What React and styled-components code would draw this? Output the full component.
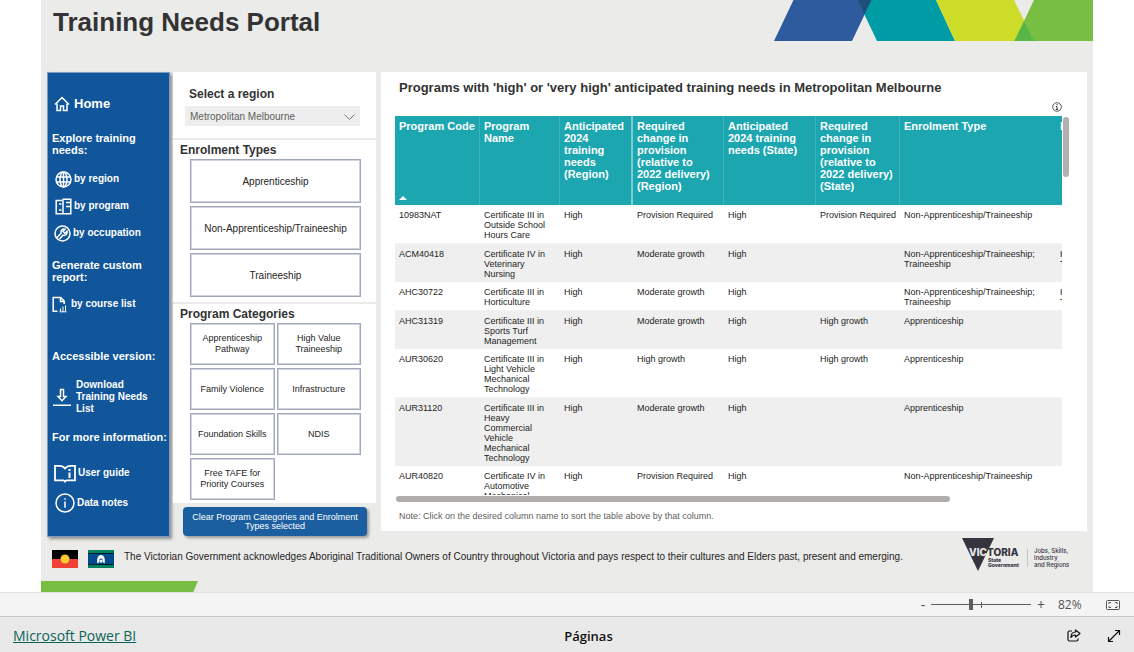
import React, {useState} from "react"
import styled, {createGlobalStyle} from "styled-components";

const GlobalStyle = createGlobalStyle`
* {
	box-sizing: border-box;
}
body {
	margin: 0;
	background: #fff;
	color: #252423;
	font-family: "Liberation Sans", Arial, sans-serif;
}
button, select, input {
	font-family: inherit;
}
`

const columns = [
	{title: "Program Code", width: 85, sorted: true},
	{title: "Program Name", width: 80},
	{title: "Anticipated 2024 training needs (Region)", width: 73, divider: true},
	{title: "Required change in provision (relative to 2022 delivery) (Region)", width: 91, pad: 12},
	{title: "Anticipated 2024 training needs (State)", width: 92},
	{title: "Required change in provision (relative to 2022 delivery) (State)", width: 84},
	{title: "Enrolment Type", width: 156, plain: true},
	{title: "Program Category", width: 100, plain: true},
];

const programs = [
	["10983NAT", "Certificate III in Outside School Hours Care", "High", "Provision Required", "High", "Provision Required", "Non-Apprenticeship/Traineeship", ""],
	["ACM40418", "Certificate IV in Veterinary Nursing", "High", "Moderate growth", "High", "", "Non-Apprenticeship/Traineeship; Traineeship", "High Value Traineeship"],
	["AHC30722", "Certificate III in Horticulture", "High", "Moderate growth", "High", "", "Non-Apprenticeship/Traineeship; Traineeship", "High Value Traineeship"],
	["AHC31319", "Certificate III in Sports Turf Management", "High", "Moderate growth", "High", "High growth", "Apprenticeship", ""],
	["AUR30620", "Certificate III in Light Vehicle Mechanical Technology", "High", "High growth", "High", "High growth", "Apprenticeship", ""],
	["AUR31120", "Certificate III in Heavy Commercial Vehicle Mechanical Technology", "High", "Moderate growth", "High", "", "Apprenticeship", ""],
	["AUR40820", "Certificate IV in Automotive Mechanical Diagnosis", "High", "Provision Required", "High", "", "Non-Apprenticeship/Traineeship", ""],
];

const enrolmentTypes = ["Apprenticeship", "Non-Apprenticeship/Traineeship", "Traineeship"];

const categories = [
	"Apprenticeship Pathway",
	"High Value Traineeship",
	"Family Violence",
	"Infrastructure",
	"Foundation Skills",
	"NDIS",
	"Free TAFE for Priority Courses",
];

/* ---------- page ---------- */

const Report = styled.div`
	margin: 0 41px;
	background: #ebebea;
`

const Header = styled.header`
	display: flex;
	justify-content: space-between;
	align-items: flex-start;
	height: 72px;
	padding-left: 12px;
	svg {
		display: block;
		flex: none;
	}
`

const PageTitle = styled.h1`
	margin: 0;
	padding-top: 6px;
	font-size: 26px;
	line-height: 32px;
	color: #333;
`

const Body = styled.div`
	display: flex;
	align-items: flex-start;
	padding: 0 6px;
`

/* ---------- sidebar ---------- */

const Sidebar = styled.nav`
	flex: none;
	display: flex;
	flex-direction: column;
	width: 123px;
	height: 465px;
	padding: 20px 0 0 4px;
	background: #11569b;
	border: 1px solid #7f9cc0;
	box-shadow: 2px 2px 3px rgba(0, 0, 0, 0.4);
`

const NavHeading = styled.h2`
	margin: ${props => props.$top || 0}px 0 0;
	font-size: 11px;
	line-height: 12px;
	color: #fff;
	white-space: ${props => (props.$oneLine ? "nowrap" : "normal")};
`

const NavItem = styled.a`
	display: flex;
	align-items: center;
	gap: ${props => props.$gap || 2}px;
	min-height: 22px;
	margin-top: ${props => props.$top || 0}px;
	padding-left: ${props => props.$indent || 0}px;
	padding-right: 10px;
	font-size: ${props => (props.$large ? 13 : 10)}px;
	font-weight: bold;
	line-height: 12px;
	color: #fff;
	text-decoration: none;
	svg {
		flex: none;
	}
`

/* ---------- filters ---------- */

const Filters = styled.div`
	flex: none;
	display: flex;
	flex-direction: column;
	gap: 2px;
	width: 203px;
	margin-left: 3px;
`

const FilterPanel = styled.section`
	padding: ${props => props.$pad};
	background: #fff;
`

const FilterTitle = styled.h2`
	margin: 0 0 0 7px;
	font-size: 12px;
	line-height: 16px;
	color: #333;
`

const RegionLabel = styled.label`
	display: block;
	padding-left: 4px;
	margin-bottom: 4px;
	font-size: 12px;
	font-weight: bold;
	line-height: 16px;
	color: #333;
`

const SelectBox = styled.div`
	position: relative;
	width: 175px;
	svg {
		position: absolute;
		top: 8px;
		right: 5px;
		pointer-events: none;
	}
`

const Select = styled.select`
	display: block;
	appearance: none;
	width: 100%;
	height: 20px;
	padding: 0 20px 0 5px;
	border: 0;
	border-radius: 0;
	background: #eee;
	color: #605e5c;
	font-size: 10px;
`

const TileGrid = styled.div`
	display: grid;
	grid-template-columns: repeat(${props => props.$columns}, 1fr);
	grid-auto-rows: ${props => props.$rowHeight}px;
	gap: 3px 2px;
	margin: 1px 15px 0 17px;
`

const Tile = styled.button`
	padding: 0 6px;
	border: 1px solid #a0a7ba;
	box-shadow: inset 0 0 0 1px #d0d4de;
	background: ${props => (props.$active ? "#d6dde8" : "#fff")};
	color: #252423;
	font-size: ${props => (props.$small ? 9 : 10)}px;
	line-height: 11px;
	cursor: pointer;
`

const ClearButton = styled.button`
	width: 184px;
	height: 29px;
	margin: 2px 0 0 10px;
	padding: 0 8px;
	border: 0;
	border-radius: 4px;
	background: #1b5fa0;
	box-shadow: 2px 2px 3px rgba(0, 0, 0, 0.35);
	color: #fff;
	font-size: 9px;
	line-height: 9px;
	cursor: pointer;
`

/* ---------- table ---------- */

const Main = styled.main`
	flex: 1;
	min-width: 0;
	margin-left: 5px;
	padding: 7px 18px 9px 14px;
	background: #fff;
`

const MainTitle = styled.h2`
	margin: 0 0 0 4px;
	font-size: 13px;
	line-height: 18px;
	color: #333;
`

const InfoRow = styled.div`
	display: flex;
	justify-content: flex-end;
	height: 19px;
	padding: 5px 7px 0 0;
`

const TableArea = styled.div`
	display: grid;
	grid-template-columns: 1fr 6px;
	gap: 1px;
`

const TableScroll = styled.div`
	height: 379px;
	overflow: hidden;
`

const Table = styled.table`
	table-layout: fixed;
	width: 761px;
	border-collapse: separate;
	border-spacing: 0;
	font-size: 9px;
	line-height: 10px;
`

const HeadCell = styled.th`
	position: relative;
	height: 89px;
	padding: 4px ${props => props.$pad || 2}px 0 4px;
	border-right: ${props => (props.$divider ? 2 : 1)}px solid ${props => (props.$divider ? "#7fcdd2" : props.$plain ? "#1ba6b0" : "#3fb4bd")};
	background: #1ba6b0;
	color: #fff;
	font-size: 11px;
	line-height: 12px;
	text-align: left;
	vertical-align: top;
	white-space: ${props => (props.$plain ? "nowrap" : "normal")};
	svg {
		position: absolute;
		left: 4px;
		bottom: 5px;
	}
`

const Row = styled.tr`
	td {
		padding: 5px 2px 3px 4px;
		vertical-align: top;
	}
	td:last-child {
		padding-right: 40px;
	}
	&:nth-child(odd) td {
		border-bottom: 1px solid #f4f4f4;
	}
	&:nth-child(even) td {
		background: #efefef;
	}
`

const VerticalThumb = styled.div`
	height: 60px;
	margin-top: 1px;
	border-radius: 3px;
	background: #b0b0b0;
`

const HorizontalThumb = styled.div`
	width: 83%;
	height: 6px;
	margin-left: 1px;
	border-radius: 3px;
	background: #b0aeac;
`

const Note = styled.p`
	margin: 8px 0 0 4px;
	font-size: 9px;
	line-height: 12px;
	color: #605e5c;
`

/* ---------- footer ---------- */

const Acknowledgement = styled.footer`
	display: flex;
	align-items: center;
	gap: 10px;
	height: 44px;
	padding: 0 21px 0 11px;
	svg {
		flex: none;
	}
	svg:last-child {
		align-self: flex-start;
	}
	p {
		flex: 1;
		margin: 0;
		padding-bottom: 4px;
		font-size: 10px;
		line-height: 14px;
	}
`

const GreenStrip = styled.div`
	width: 157px;
	height: 11px;
	background: #78be43;
	clip-path: polygon(0 0, 100% 0, 97% 100%, 0 100%);
`

const ZoomBar = styled.div`
	display: flex;
	align-items: center;
	justify-content: flex-end;
	height: 24px;
	padding-right: 14px;
	border-top: 1px solid #e1e1e1;
	background: #f4f4f4;
	color: #555;
	font-family: "Open Sans", "Noto Sans", sans-serif;
	font-size: 12px;
`

const IconButton = styled.button`
	display: flex;
	align-items: center;
	justify-content: center;
	width: ${props => props.$width || 16}px;
	height: 20px;
	padding: 0;
	border: 0;
	background: none;
	color: inherit;
	font-size: 14px;
	cursor: pointer;
`

const SliderTrack = styled.div`
	position: relative;
	width: 100px;
	height: 20px;
	&:after {
		content: "";
		position: absolute;
		left: 50px;
		top: 7px;
		width: 1px;
		height: 6px;
		background: #605e5c;
	}
`

const Slider = styled.input`
	appearance: none;
	display: block;
	width: 100%;
	height: 20px;
	margin: 0;
	background: linear-gradient(#605e5c, #605e5c) center / 100% 1px no-repeat;
	&::-webkit-slider-thumb {
		appearance: none;
		width: 4px;
		height: 11px;
		background: #605e5c;
	}
`

const ZoomValue = styled.span`
	width: 30px;
	margin: 0 18px 0 7px;
	white-space: nowrap;
`

const BottomBar = styled.div`
	display: grid;
	grid-template-columns: 1fr auto 1fr;
	align-items: center;
	height: 36px;
	padding: 2px 12px 0 13px;
	border-top: 1px solid #c8c8c8;
	background: #e9e9e9;
	font-family: "Open Sans", "Noto Sans", sans-serif;
`

const BrandLink = styled.a`
	justify-self: start;
	color: #0b6357;
	font-size: 14px;
	line-height: 20px;
`

const PagesLabel = styled.span`
	margin-left: 42px;
	font-size: 13px;
	font-weight: 600;
	line-height: 20px;
	color: #111;
`

const BarActions = styled.div`
	display: flex;
	justify-content: flex-end;
	gap: 24px;
	color: #111;
`

/* ---------- drawings ---------- */

function Icon({size = 16, height, children, width = 1.5}) {
	return (
		<svg width={size} height={height || size} viewBox={`0 0 ${size} ${height || size}`} fill="none" stroke="currentColor" strokeWidth={width} aria-hidden="true">
			{children}
		</svg>
	);
}

const HomeIcon = () => (
	<Icon size={16}>
		<path d="M1 8.500 8 1.500l7 7M3 7.500v7h3.500v-4.500h3v4.500H13v-7" />
	</Icon>
);

const GlobeIcon = () => (
	<Icon size={17}>
		<circle cx="8.500" cy="8.500" r="7.500" />
		<ellipse cx="8.500" cy="8.500" rx="3.500" ry="7.500" />
		<path d="M1.500 6h14M1.500 11h14M8.500 1v15" />
	</Icon>
);

const ProgramIcon = () => (
	<Icon size={17}>
		<path d="M7 2.500H1.200v13.300H8M8 1.200h7.800v14.600H8zM4 6h2.500M4 12h2.500M11 4.500h4M11 8.500h4" />
	</Icon>
);

const WrenchIcon = () => (
	<Icon size={17}>
		<circle cx="8.500" cy="8.500" r="7.500" />
		<path d="M3 12.500 7 8.300C6.200 5.500 8.500 3.500 11 4.200L9 6.300l1.800 1.900 2.300-2c.6 2.700-1.500 4.600-4 4L5.500 14" />
	</Icon>
);

const CourseListIcon = () => (
	<Icon size={16} height={17}>
		<path d="M5.500 15.300H1.200V1.500h7.500l3.500 3.600V8M8.500 1.500v4h3.700" />
		<path d="M8.500 15.500v-3M11 15.500v-5M13.500 15.500v-6M7.500 15.800h7" strokeWidth="1" />
	</Icon>
);

const DownloadIcon = () => (
	<Icon size={18} height={19}>
		<path d="M7.500 1.500h3v7H13l-4 4.200-4-4.200h2.500zM0 17.300h18" />
	</Icon>
);

const GuideIcon = () => (
	<Icon size={22} height={19} width={1.8}>
		<path d="M11 4.500C9.500 2.500 7 1.800 5.500 1.800H1v14.500h8.300c.7 0 1.200.4 1.700 1.200.5-.8 1-1.200 1.700-1.200H21V1.800h-4.500c-2.500 0-4 .7-5.500 2.700z" />
		<path d="M15.500 5v2M15.500 8.500V14" strokeWidth="2" />
	</Icon>
);

const NotesIcon = () => (
	<Icon size={20}>
		<circle cx="10" cy="10" r="9" />
		<path d="M10 5.200v1.600M10 8.500v6.300" />
	</Icon>
);

function HeaderBanner() {
	return (
		<svg width="319" height="41" viewBox="0 0 319 41" aria-hidden="true">
			<path d="M19.500 0h78L78 41H0z" fill="#2e5a9e" />
			<path d="M83.500 0h78.500l19 41h-78z" fill="#009ca6" />
			<path d="M83.500 0h14L90.500 14.500z" fill="#1f5079" />
			<path d="M162 0h78l20 41h-79z" fill="#cddc29" />
			<path d="M260 0h59v41h-78.500z" fill="#78be43" />
			<path d="M250 21 260 41h-19.500z" fill="#58b647" />
		</svg>
	);
}

function AboriginalFlag() {
	return (
		<svg width="26" height="18" viewBox="0 0 26 18" role="img" aria-label="Aboriginal flag">
			<path d="M0 0h26v9H0z" fill="#000" />
			<path d="M0 9h26v9H0z" fill="#ef4135" />
			<circle cx="13" cy="9" r="4.500" fill="#fecb2f" />
		</svg>
	);
}

function TorresStraitFlag() {
	return (
		<svg width="26" height="18" viewBox="0 0 26 18" role="img" aria-label="Torres Strait Islander flag">
			<path d="M0 0h26v18H0z" fill="#00815f" />
			<path d="M0 3h26v12H0z" fill="#001a2b" />
			<path d="M0 4h26v10H0z" fill="#004b8d" />
			<path d="M9.500 13.500c-1-4 0-8.500 3.500-8.500s4.500 4.500 3.500 8.500L14.800 12c.3-2-.3-3.500-1.800-3.500S10.900 10 11.200 12z" fill="#fff" />
			<path d="m13 9 .7 1.300 1.400.2-1 1 .2 1.400-1.300-.7-1.300.7.2-1.400-1-1 1.400-.2z" fill="#fff" />
		</svg>
	);
}

function VictoriaLogo() {
	return (
		<svg width="110" height="36" viewBox="0 0 110 36" fontFamily="Inter, sans-serif" fill="#35343f">
			<path d="M0 1h32L16 34z" />
			<text x="7" y="19" fontSize="10" fontWeight="800">
				<tspan fill="#ebebea">VIC</tspan>TORIA
			</text>
			<text x="26" y="25" fontSize="5" fontWeight="800">State</text>
			<text x="26" y="30" fontSize="5" fontWeight="800">Government</text>
			<path d="M65 12h1v18h-1z" fill="#c4c4c4" />
			<g fontSize="6" fontWeight="500">
				<text x="72" y="16">Jobs, Skills,</text>
				<text x="72" y="23">Industry</text>
				<text x="72" y="30">and Regions</text>
			</g>
		</svg>
	);
}

/* ---------- sections ---------- */

function Navigation() {
	return (
		<Sidebar>
			<NavItem href="#home" $indent={2} $gap={4} $large><HomeIcon />Home</NavItem>
			<NavHeading $top={17}>Explore training needs:</NavHeading>
			<NavItem href="#region" $top={12} $indent={3}><GlobeIcon />by region</NavItem>
			<NavItem href="#program" $top={5} $indent={3}><ProgramIcon />by program</NavItem>
			<NavItem href="#occupation" $top={5} $indent={2}><WrenchIcon />by occupation</NavItem>
			<NavHeading $top={15}>Generate custom report:</NavHeading>
			<NavItem href="#courses" $top={10} $gap={3}><CourseListIcon />by course list</NavItem>
			<NavHeading $top={35}>Accessible version:</NavHeading>
			<NavItem href="#download" $top={17} $indent={1} $gap={5}><DownloadIcon /><span>Download Training Needs List</span></NavItem>
			<NavHeading $top={16} $oneLine>For more information:</NavHeading>
			<NavItem href="#guide" $top={19} $indent={2}><GuideIcon />User guide</NavItem>
			<NavItem href="#notes" $top={8} $indent={3}><NotesIcon />Data notes</NavItem>
		</Sidebar>
	);
}

function FilterColumn() {
	const [selected, setSelected] = useState([]);
	const toggle = name =>
		setSelected(selected.includes(name) ? selected.filter(s => s !== name) : [...selected, name]);

	return (
		<Filters>
			<FilterPanel $pad="14px 0 12px 12px">
				<RegionLabel htmlFor="region">Select a region</RegionLabel>
				<SelectBox>
					<Select id="region" defaultValue="Metropolitan Melbourne">
						<option>Metropolitan Melbourne</option>
					</Select>
					<svg width="11" height="6" viewBox="0 0 11 6" fill="none" stroke="#777"><path d="m.5.5 5 5 5-5" /></svg>
				</SelectBox>
			</FilterPanel>
			<FilterPanel $pad="2px 0 5px">
				<FilterTitle>Enrolment Types</FilterTitle>
				<TileGrid $columns={1} $rowHeight={44}>
					{enrolmentTypes.map(name => (
						<Tile key={name} $active={selected.includes(name)} onClick={() => toggle(name)}>{name}</Tile>
					))}
				</TileGrid>
			</FilterPanel>
			<FilterPanel $pad="2px 0 3px">
				<FilterTitle>Program Categories</FilterTitle>
				<TileGrid $columns={2} $rowHeight={42}>
					{categories.map(name => (
						<Tile key={name} $small $active={selected.includes(name)} onClick={() => toggle(name)}>{name}</Tile>
					))}
				</TileGrid>
			</FilterPanel>
			<ClearButton onClick={() => setSelected([])}>Clear Program Categories and Enrolment Types selected</ClearButton>
		</Filters>
	);
}

function ProgramTable() {
	return (
		<Main>
			<MainTitle>Programs with 'high' or 'very high' anticipated training needs in Metropolitan Melbourne</MainTitle>
			<InfoRow>
				<svg width="10" height="10" viewBox="0 0 10 10" fill="none" stroke="#333" role="img" aria-label="Information">
					<circle cx="5" cy="5" r="4.300" strokeWidth=".8" />
					<path d="M5 2v1.200M4 4.500h1v3M3.800 7.500h2.400" />
				</svg>
			</InfoRow>
			<TableArea>
				<TableScroll>
					<Table>
						<colgroup>
							{columns.map(col => <col key={col.title} width={col.width} />)}
						</colgroup>
						<thead>
							<tr>
								{columns.map(col => (
									<HeadCell key={col.title} $divider={col.divider} $plain={col.plain} $pad={col.pad}>
										{col.title}
										{col.sorted && <svg width="8" height="4" viewBox="0 0 8 4"><path d="M0 4l4-4 4 4z" fill="#fff" /></svg>}
									</HeadCell>
								))}
							</tr>
						</thead>
						<tbody>
							{programs.map(program => (
								<Row key={program[0]}>
									{program.map((value, i) => <td key={i}>{value}</td>)}
								</Row>
							))}
						</tbody>
					</Table>
				</TableScroll>
				<VerticalThumb />
				<HorizontalThumb />
			</TableArea>
			<Note>Note: Click on the desired column name to sort the table above by that column.</Note>
		</Main>
	);
}

export default function App() {
	const [zoom, setZoom] = useState(82);

	return (
		<>
			<GlobalStyle />
			<Report>
				<Header>
					<PageTitle>Training Needs Portal</PageTitle>
					<HeaderBanner />
				</Header>
				<Body>
					<Navigation />
					<FilterColumn />
					<ProgramTable />
				</Body>
				<Acknowledgement>
					<AboriginalFlag />
					<TorresStraitFlag />
					<p>The Victorian Government acknowledges Aboriginal Traditional Owners of Country throughout Victoria and pays respect to their cultures and Elders past, present and emerging.</p>
					<VictoriaLogo />
				</Acknowledgement>
				<GreenStrip />
			</Report>
			<ZoomBar>
				<IconButton aria-label="Zoom out" onClick={() => setZoom(zoom - 10)}>-</IconButton>
				<SliderTrack>
					<Slider type="range" aria-label="Zoom" min="10" max="190" value={zoom} onChange={e => setZoom(Number(e.target.value))} />
				</SliderTrack>
				<IconButton $width={20} aria-label="Zoom in" onClick={() => setZoom(zoom + 10)}>+</IconButton>
				<ZoomValue>{zoom}%</ZoomValue>
				<IconButton $width={14} aria-label="Fit to page">
					<Icon size={14} height={10} width={1}>
						<rect x=".5" y=".5" width="13" height="9" rx="1" />
						<path d="M3 4V2.500h2M9 2.500h2V4M11 6v1.500H9M5 7.500H3V6" />
					</Icon>
				</IconButton>
			</ZoomBar>
			<BottomBar>
				<BrandLink href="#powerbi">Microsoft Power BI</BrandLink>
				<PagesLabel>Páginas</PagesLabel>
				<BarActions>
					<IconButton aria-label="Share">
						<Icon size={14} height={13} width={1.2}>
							<path d="M5 2H2.500C1.500 2 1 2.500 1 3.500v7c0 1 .5 1.500 1.500 1.500h7c1 0 1.500-.5 1.500-1.500V9.500" />
							<path d="M8.500 1v2C5.500 3 4 5 4 8.500c1-1.800 2.500-2.500 4.500-2.500v2L13 4.500z" strokeLinejoin="round" />
						</Icon>
					</IconButton>
					<IconButton aria-label="Full screen">
						<Icon size={14} width={1.2}>
							<path d="M1.500 12.500l11-11M8 1.500h4.500V6M1.500 8v4.500H6" />
						</Icon>
					</IconButton>
				</BarActions>
			</BottomBar>
		</>
	);
}
